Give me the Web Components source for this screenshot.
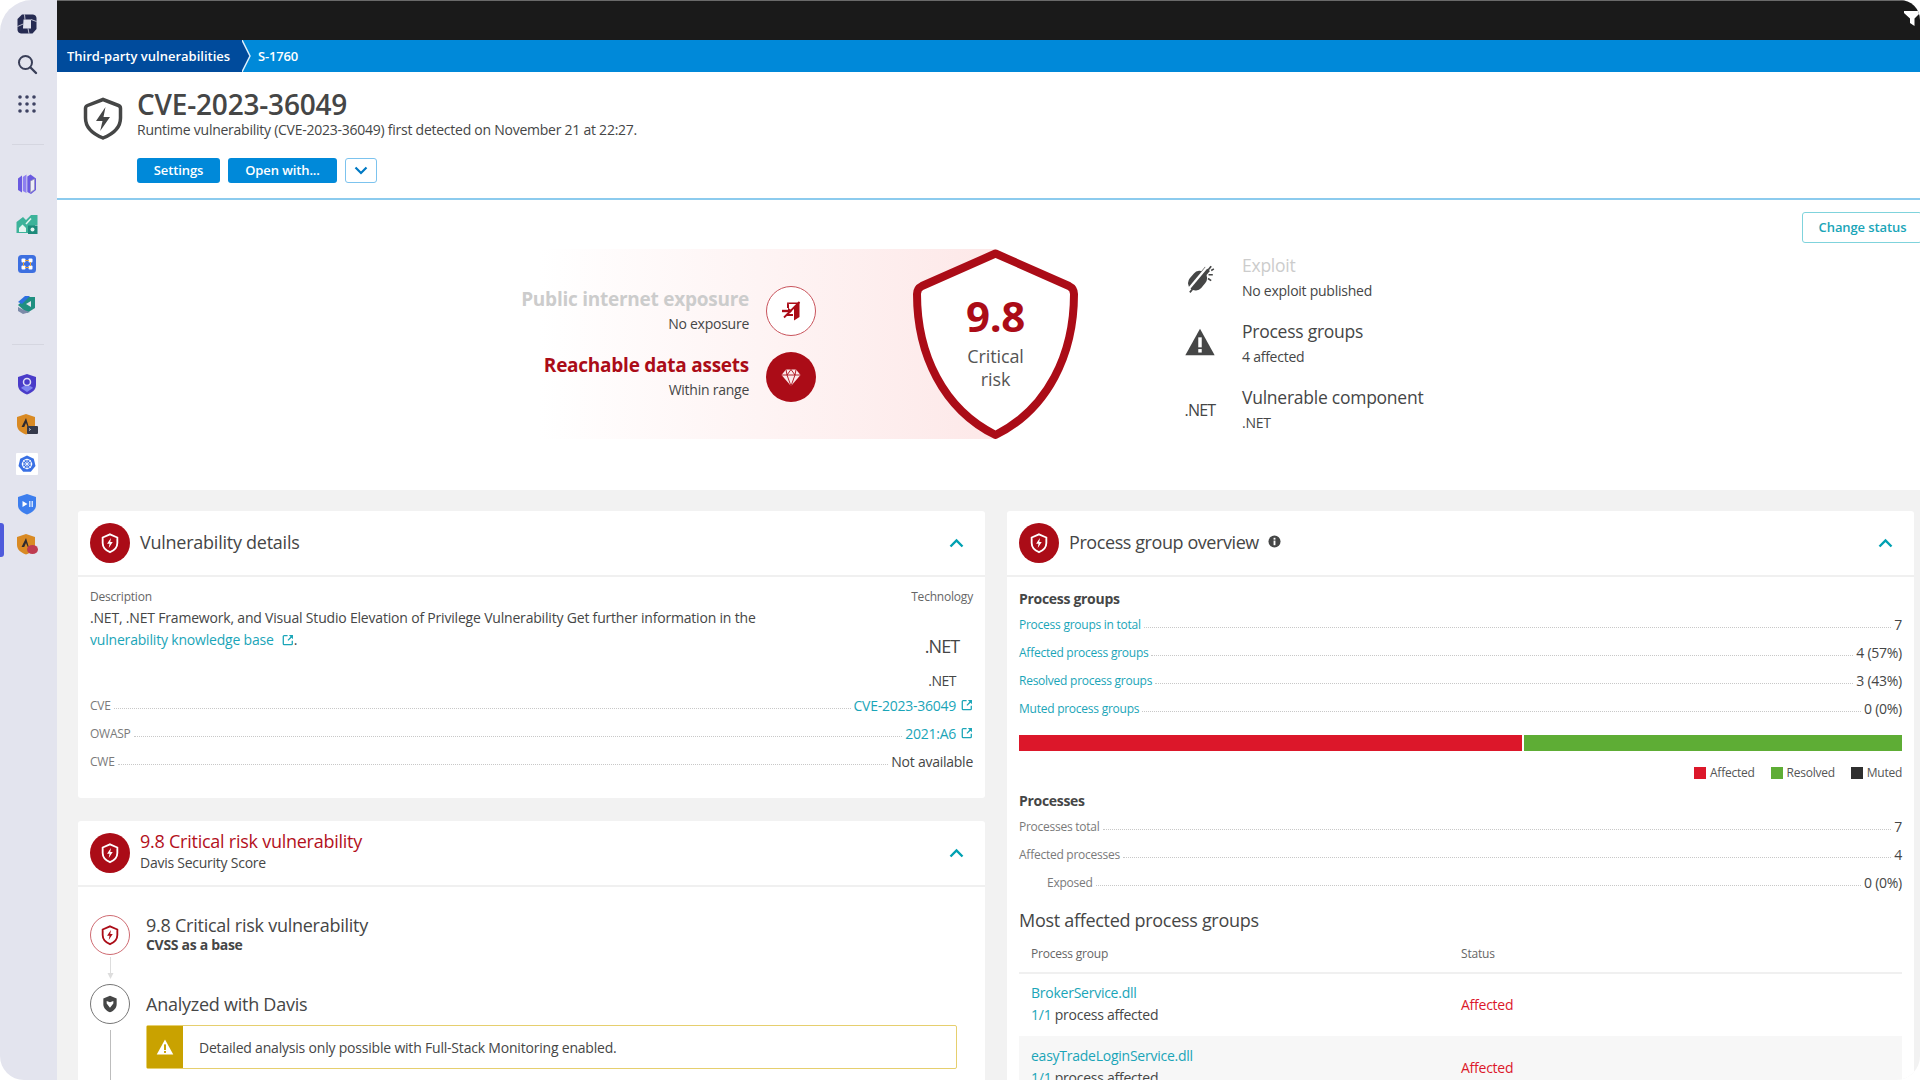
<!DOCTYPE html>
<html lang="en">
<head>
<meta charset="utf-8">
<title>CVE-2023-36049</title>
<style>
  html, body { margin: 0; padding: 0; background: #fff; }
  body { width: 1920px; height: 1080px; overflow: hidden; font-family: "Open Sans", "Liberation Sans", sans-serif; color: #454646; }
</style>
</head>
<body>
<dt-app>
  <dt-rail slot="rail"></dt-rail>
  <dt-crumbs></dt-crumbs>
  <dt-page-header></dt-page-header>
  <dt-hero></dt-hero>
  <dt-columns>
    <div slot="left">
      <dt-panel heading="Vulnerability details">
        <dt-details></dt-details>
      </dt-panel>
      <dt-panel heading="9.8 Critical risk vulnerability" sub="Davis Security Score" danger>
        <dt-score></dt-score>
      </dt-panel>
    </div>
    <div slot="right">
      <dt-panel heading="Process group overview" info>
        <dt-overview></dt-overview>
      </dt-panel>
    </div>
  </dt-columns>
</dt-app>

<script>
const ICONS = {
  shieldBolt: `<path d="M12 2.500 20 6v6c0 5-3.200 8-8 10-4.800-2-8-5-8-10V6z" fill="none" stroke="currentColor" stroke-width="2"/><path d="M13 6.500 8.800 12.800h2.700l-.9 4.700 4.400-6.500h-2.700z" fill="currentColor"/>`,
  external: `<path d="M6.500 2H2.500A1 1 0 0 0 1.500 3v8.500a1 1 0 0 0 1 1H11a1 1 0 0 0 1-1V8" fill="none" stroke="currentColor" stroke-width="1.500"/><path d="M8 1.200h4.800V6l-1.700-1.700-3.600 3.700-1.100-1.100 3.500-3.700z" fill="currentColor"/>`,
  warning: `<path d="M12 2 23 22H1z" fill="currentColor"/><rect x="10.700" y="8.500" width="2.600" height="7.500" fill="var(--mark,#fff)"/><rect x="10.700" y="17.300" width="2.600" height="2.600" fill="var(--mark,#fff)"/>`
};

const svg = (name, size) => `<svg width="${size}" height="${size}" viewBox="0 0 ${name === 'external' ? 14 : 24} ${name === 'external' ? 14 : 24}">${ICONS[name]}</svg>`;

class DtApp extends HTMLElement {
  constructor() {
    super();
    this.attachShadow({ mode: 'open' }).innerHTML = `
      <style>
        :host { display: flex; width: 1920px; height: 1080px; border-radius: 32px 20px 24px 24px; overflow: hidden; background: #fff; font-size: 14px; }
        .rail { flex: 0 0 57px; }
        main { flex: 1; min-width: 0; display: flex; flex-direction: column; }
        .top { flex: 0 0 40px; background: #1a1a1a; box-shadow: inset 0 1px #6a6a6a; display: flex; justify-content: flex-end; align-items: flex-start; }
        .top svg { margin: 11px 0 0 0; }
      </style>
      <div class="rail"><slot name="rail"></slot></div>
      <main>
        <div class="top"><svg width="16" height="16" viewBox="0 0 16 16"><path d="M0 0h16v2l-5.500 5.500V15L6 12V7.500L0 2z" fill="#fff"/></svg></div>
        <slot></slot>
      </main>`;
  }
}

class DtRail extends HTMLElement {
  constructor() {
    super();
    const item = inner => `<div class="it"><svg width="24" height="24" viewBox="0 0 24 24">${inner}</svg></div>`;
    this.attachShadow({ mode: 'open' }).innerHTML = `
      <style>
        :host { display: flex; flex-direction: column; height: 100%; background: #e3e4ee; position: relative; box-sizing: border-box; padding-top: 4px; }
        .it { height: 40px; display: flex; align-items: center; justify-content: center; padding-right: 3px; }
        hr { border: 0; height: 1px; background: #d5d6e0; margin: 20px 13px 19px 12px; }
        .active { position: absolute; left: 0; top: 523px; width: 4px; height: 34px; background: #4f5bdc; border-radius: 0 3px 3px 0; }
      </style>
      ${item(`<path d="M7 2.500H18Q21.500 3 21.500 6.500V17L17.500 21.500H6Q2.500 21 2.500 17.500V7z" fill="#262b52"/><path d="M8.500 7.500H16V16.500H8z" fill="#e3e4ee"/><path d="M2.500 14.500 8.200 12M14 21.500 13 16.500M16 7.500 21.500 9.500M10 7.500 9.500 2.500" stroke="#e3e4ee" stroke-width=".8"/>`)}
      ${item(`<circle cx="10.500" cy="10.500" r="6.500" fill="none" stroke="#3a3f58" stroke-width="2"/><path d="M15.500 15.500 21 21" stroke="#3a3f58" stroke-width="2.400" stroke-linecap="round"/>`)}
      ${item(`<g fill="#3e4262">${[5,12,19].map(y => [5,12,19].map(x => `<circle cx="${x}" cy="${y}" r="1.800"/>`).join('')).join('')}</g>`)}
      <hr>
      ${item(`<path d="M3 6.500 7 3.500V20.500L3 18z" fill="#6a5ae0"/><path d="M7.800 5 11.500 2.500V21L7.800 19z" fill="#8d7ef0"/><path d="M12.300 4.500 15.500 2.500 21 6.500V18L16 22 12.300 20z" fill="#6a5ae0"/><path d="M15.500 9 19.500 7V17.500L15.500 20.500z" fill="#eeeef6" stroke="#9a9ab5" stroke-width=".7"/>`)}
      ${item(`<path d="M1.500 10 8 5l3 3 5-5h6.500v10H20v8H1.500z" fill="#3db39a"/><path d="M13 13.500h9.500V22H13z" fill="#1c8a7a"/><path d="M4 16l3.500-3.500L11 16v4H4z" fill="#e3f5f0"/><path d="M11 12l5-5.500" stroke="#e3f5f0" stroke-width="1.500"/><circle cx="17.500" cy="17.500" r="2" fill="#e3f5f0"/>`)}
      ${item(`<rect x="3" y="3" width="18" height="18" rx="3.500" fill="#3d6fe0"/><g fill="#fff"><rect x="6.500" y="6.500" width="4" height="4" rx="1"/><rect x="13.500" y="6.500" width="4" height="4" rx="1"/><rect x="6.500" y="13.500" width="4" height="4" rx="1"/><rect x="13.500" y="13.500" width="4" height="4" rx="1"/></g><path d="M10 8.500h4M8.500 10v4M15.500 10v4M10 15.500h4" stroke="#e8a33c" stroke-width="1"/>`)}
      ${item(`<path d="M3 13 12 5l8 0v11l-8 5z" fill="#1f8f80"/><path d="M3 10 10 4h5l-8 8z" fill="#2e6fe0"/><path d="M3 15 9 18l6 2-7 2-5-3z" fill="#7c8aa8"/><path d="M11 12l5-3v6z" fill="#e3e4ee"/>`)}
      <hr>
      ${item(`<path d="M12 2 21 5v8c0 4.500-3.500 7.500-9 9.500C6.500 20.500 3 17.500 3 13V5z" fill="#4a3cc9"/><circle cx="12" cy="10" r="3.500" fill="none" stroke="#dfe0f5" stroke-width="1.500"/><path d="M6 16c2-3 10-3 12 0l-6 4z" fill="#7d84f0"/>`)}
      ${item(`<path d="M11 2 20 5v8c0 4.500-3.500 7.500-9 9.500C5.500 20.500 2 17.500 2 13V5z" fill="#d98a24"/><path d="M11 6l-4.500 9h2.700l1.800-4 1.800 4h1z" fill="#2d2a30"/><rect x="12" y="14" width="11" height="8" rx="1" fill="#35394a"/><path d="M14 16.500l1.500 1-1.500 1" stroke="#c9cad6" fill="none"/>`)}
      ${item(`<rect x="1" y="1" width="22" height="22" rx="1" fill="#fff"/><path d="M12 3.500 18.800 6.700 20.500 14 15.800 19.800H8.200L3.500 14 5.200 6.700z" fill="#3970e4"/><circle cx="12" cy="12" r="4.500" fill="none" stroke="#fff" stroke-width="1.200"/><path d="M12 6.500v11M6.500 12h11M8 8l8 8M16 8l-8 8" stroke="#fff" stroke-width=".7"/>`)}
      ${item(`<path d="M12 2 21 5v8c0 4.500-3.500 7.500-9 9.500C6.500 20.500 3 17.500 3 13V5z" fill="#3d7eee"/><path d="M7.500 9l5 3-5 3z" fill="#fff"/><rect x="14" y="9" width="1.500" height="6" fill="#cfe0fb"/><rect x="16.500" y="9" width="1.500" height="6" fill="#cfe0fb"/>`)}
      ${item(`<path d="M11 2 20 5v8c0 4.500-3.500 7.500-9 9.500C5.500 20.500 2 17.500 2 13V5z" fill="#d98a24"/><path d="M11 6l-4.500 9h2.700l1.800-4 1.800 4h1z" fill="#2d2a30"/><ellipse cx="17.500" cy="17.500" rx="5.500" ry="4.500" fill="#bf3b50"/>`)}
      <div class="active"></div>`;
  }
}

class DtCrumbs extends HTMLElement {
  constructor() {
    super();
    this.attachShadow({ mode: 'open' }).innerHTML = `
      <style>
        :host { display: flex; flex: 0 0 32px; align-items: stretch; background: #0089d9; color: #fff; font-size: 13px; font-weight: 600; }
        .first { background: #004b9c; width: 185px; padding-left: 10px; box-sizing: border-box; display: flex; align-items: center; white-space: nowrap; }
        svg { display: block; }
        .cur { margin-left: 7px; display: flex; align-items: center; letter-spacing: -.2px; }
      </style>
      <div class="first">Third-party vulnerabilities</div>
      <svg width="9" height="32" viewBox="0 0 9 32"><path d="M0 0 8 16 0 32z" fill="#004b9c"/><path d="M0 0 8 16 0 32" fill="none" stroke="#d8ecfa" stroke-width="1.500"/></svg>
      <div class="cur">S-1760</div>`;
  }
}

class DtPageHeader extends HTMLElement {
  constructor() {
    super();
    this.attachShadow({ mode: 'open' }).innerHTML = `
      <style>
        :host { display: flex; flex: 0 0 126px; gap: 14px; padding: 0 0 0 26px; border-bottom: 2px solid #8ccbee; background: #fff; }
        .ico { margin-top: 25px; color: #454646; width: 40px; height: 43px; }
        .col { padding-top: 15px; display: flex; flex-direction: column; align-items: flex-start; }
        h1 { margin: 0; font-size: 28px; line-height: 34px; font-weight: 600; letter-spacing: -.2px; color: #454646; }
        p { margin: 0; font-size: 14px; line-height: 18px; color: #454646; letter-spacing: -.25px; }
        .btns { display: flex; gap: 8px; margin-top: 19px; }
        button { font: 600 13px/25px "Open Sans", sans-serif; letter-spacing: -.1px; height: 25px; border: 0; border-radius: 3px; background: #0089d9; color: #fff; padding: 0; }
        .s { width: 83px; } .o { width: 109px; }
        .d { width: 32px; background: #fff; border: 1px solid #7cc3ee; display: flex; align-items: center; justify-content: center; }
      </style>
      <svg class="ico" viewBox="0 0 40 43"><path d="M20 2.500 35.500 8.500Q37.500 9.300 37.500 11.500V21C37.500 31 30 37 20 41 10 37 2.500 31 2.500 21V11.500Q2.500 9.300 4.500 8.500Z" fill="none" stroke="currentColor" stroke-width="3.500"/><path d="M22.500 10 13 24h6.500l-2.300 10L27 20h-6.500z" fill="currentColor"/></svg>
      <div class="col">
        <h1>CVE-2023-36049</h1>
        <p>Runtime vulnerability (CVE-2023-36049) first detected on November 21 at 22:27.</p>
        <div class="btns">
          <button class="s">Settings</button>
          <button class="o">Open with...</button>
          <button class="d"><svg width="14" height="9" viewBox="0 0 14 9"><path d="M1.500 1.500 7 7l5.500-5.500" fill="none" stroke="#0079c4" stroke-width="2.200"/></svg></button>
        </div>
      </div>`;
  }
}

class DtFact extends HTMLElement {
  constructor() {
    super();
    this.attachShadow({ mode: 'open' }).innerHTML = `
      <style>
        :host { display: flex; align-items: center; justify-content: flex-end; gap: 17px; height: 50px; }
        .t { text-align: right; }
        .a { font-size: 19px; line-height: 26px; font-weight: 700; letter-spacing: -.25px; color: var(--head, #ccc); white-space: nowrap; }
        .b { font-size: 14px; line-height: 24px; color: #454646; letter-spacing: -.25px; }
        .c { flex: none; width: 50px; height: 50px; border-radius: 50%; box-sizing: border-box; display: flex; align-items: center; justify-content: center; }
        :host([on]) .c { background: #ab0c17; }
        :host(:not([on])) .c { background: #fff; border: 1.500px solid #c9545c; }
      </style>
      <div class="t"><div class="a"><slot name="a"></slot></div><div class="b"><slot name="b"></slot></div></div>
      <div class="c"><slot></slot></div>`;
  }
}

class DtMeta extends HTMLElement {
  constructor() {
    super();
    this.attachShadow({ mode: 'open' }).innerHTML = `
      <style>
        :host { display: flex; align-items: center; gap: 24px; height: 50px; }
        .i { flex: 0 0 36px; display: flex; justify-content: center; font-size: 16px; color: #454646; letter-spacing: -.8px; }
        .a { font-size: 17.500px; line-height: 25px; color: var(--head, #454646); letter-spacing: -.25px; white-space: nowrap; }
        .b { font-size: 14px; line-height: 25px; color: #454646; letter-spacing: -.25px; }
      </style>
      <div class="i"><slot></slot></div>
      <div><div class="a"><slot name="a"></slot></div><div class="b"><slot name="b"></slot></div></div>`;
  }
}

class DtHero extends HTMLElement {
  constructor() {
    super();
    this.attachShadow({ mode: 'open' }).innerHTML = `
      <style>
        :host { display: flex; flex: 0 0 290px; box-sizing: border-box; padding: 49px 0 0 463px; background: #fff; align-items: flex-start; }
        .band { display: flex; align-items: center; width: 558px; height: 190px; flex: none; background: linear-gradient(90deg, rgba(253,232,232,0) 3.500%, #fde8e8 85.300%, rgba(253,232,232,0) 85.300%); }
        .facts { width: 296px; display: flex; flex-direction: column; gap: 16px; }
        .shield { width: 165px; height: 190px; margin-left: 97px; position: relative; flex: none; display: flex; flex-direction: column; align-items: center; box-sizing: border-box; padding-top: 41px; }
        .shield > svg { position: absolute; inset: 0; }
        .score, .lab { position: relative; }
        .score { font-size: 42px; line-height: 52px; font-weight: 700; color: #ab0c17; letter-spacing: -.3px; }
        .lab { font-size: 18px; line-height: 23px; color: #555; text-align: center; margin-top: 3px; letter-spacing: -.1px; }
        .meta { margin-left: 104px; display: flex; flex-direction: column; gap: 16px; height: 190px; justify-content: center; }
        .change { margin: -37px -2px 0 auto; height: 31px; width: 120px; box-sizing: border-box; border: 1.500px solid #7fd3dc; border-radius: 3px; background: #fff; color: #1aa5b8; font: 600 13px "Open Sans", sans-serif; letter-spacing: -.1px; padding: 0 0 2px 1px; }
      </style>
      <div class="band">
        <div class="facts">
          <dt-fact>
            <span slot="a">Public internet exposure</span><span slot="b">No exposure</span>
            <svg width="24" height="24" viewBox="0 0 24 24"><path d="M8 3.500h12.500V18l-5.500 3.500V8.500L19 5H9.500z" fill="#ab0c17"/><path d="M8 3.500V9h2V5.500zM8 15v2h6v-2z" fill="#ab0c17"/><path d="M3 12h9" stroke="#ab0c17" stroke-width="2.400"/><path d="M9 8.500 13 12l-4 3.500z" fill="#ab0c17"/><path d="M5 18.500 20.500 3" stroke="#ab0c17" stroke-width="1.800"/></svg>
          </dt-fact>
          <dt-fact on style="--head:#ab0c17">
            <span slot="a">Reachable data assets</span><span slot="b">Within range</span>
            <svg width="22" height="22" viewBox="0 0 22 22"><path d="M6 3.500h10L20.500 9 11 20 1.500 9z" fill="#fbe9ea"/><path d="M1.500 9h19M7 9l4 11 4-11M6 3.500 7 9l4-5.500L15 9l1-5.500" fill="none" stroke="#ab0c17" stroke-width=".9"/></svg>
          </dt-fact>
        </div>
        <div class="shield">
          <svg width="165" height="190" viewBox="0 0 165 190"><path d="M82.500 4.500 156 37Q161 39.500 161 45C161 105 135 160 82.500 186 30 160 4 105 4 45Q4 39.500 9 37Z" fill="#fff" stroke="#ab0c17" stroke-width="8" stroke-linejoin="round"/></svg>
          <div class="score">9.8</div>
          <div class="lab">Critical<br>risk</div>
        </div>
      </div>
      <div class="meta">
        <dt-meta style="--head:#ccc">
          <span slot="a">Exploit</span><span slot="b">No exploit published</span>
          <svg width="30" height="32" viewBox="0 0 28 30"><g transform="rotate(40 13 16)"><rect x="6" y="8" width="14" height="20" rx="7" fill="#454646"/><rect x="10" y="3.500" width="6" height="5.500" fill="#454646"/></g><path d="M2 27 22 3" stroke="#fff" stroke-width="2.200"/><path d="M4.500 28.500 24.500 4" stroke="#454646" stroke-width="1.600"/><path d="M22 12h4M21.500 15.500l3 2M24.500 8l2.500-1.500" stroke="#454646" stroke-width="1.500"/></svg>
        </dt-meta>
        <dt-meta>
          <span slot="a">Process groups</span><span slot="b">4 affected</span>
          <span style="color:#454646">${svg('warning', 32)}</span>
        </dt-meta>
        <dt-meta>
          <span slot="a">Vulnerable component</span><span slot="b">.NET</span>
          .NET
        </dt-meta>
      </div>
      <button class="change">Change status</button>`;
  }
}

class DtColumns extends HTMLElement {
  constructor() {
    super();
    this.attachShadow({ mode: 'open' }).innerHTML = `
      <style>
        :host { display: flex; flex: 1; min-height: 0; gap: 22px; padding: 21px 6px 0 21px; background: #f2f2f2; overflow: hidden; }
        ::slotted(div) { flex: 0 0 907px; display: flex; flex-direction: column; gap: 23px; min-width: 0; }
      </style>
      <slot name="left"></slot><slot name="right"></slot>`;
  }
}

class DtBadge extends HTMLElement {
  constructor() {
    super();
    const kind = this.getAttribute('kind') || 'solid';
    this.attachShadow({ mode: 'open' }).innerHTML = `
      <style>
        :host { display: flex; flex: none; width: 40px; height: 40px; border-radius: 50%; box-sizing: border-box; align-items: center; justify-content: center; }
        :host([kind="solid"]) { background: #ab0c17; color: #fff; }
        :host([kind="line"]) { background: #fff; border: 1.500px solid #cf6b72; color: #ab0c17; }
        :host([kind="dark"]) { background: #fff; border: 1.500px solid #777; color: #454646; }
      </style>
      ${kind === 'dark'
        ? `<svg width="20" height="20" viewBox="0 0 24 24"><path d="M12 2 20 5.500V12c0 5-3.200 8-8 10-4.800-2-8-5-8-10V5.500z" fill="currentColor"/><path d="M8 8.500l4 1.500 4-1.500v3l-4 5-4-5z" fill="#fff"/></svg>`
        : svg('shieldBolt', 22)}`;
  }
}

class DtPanel extends HTMLElement {
  constructor() {
    super();
    const heading = this.getAttribute('heading');
    const sub = this.getAttribute('sub');
    const info = this.hasAttribute('info') ? `<svg class="info" width="13" height="13" viewBox="0 0 14 14"><circle cx="7" cy="7" r="6.500" fill="#454646"/><rect x="6" y="6" width="2" height="5" fill="#fff"/><rect x="6" y="3" width="2" height="2" fill="#fff"/></svg>` : '';
    this.attachShadow({ mode: 'open' }).innerHTML = `
      <style>
        :host { display: block; background: #fff; border-radius: 3px; }
        header { display: flex; align-items: center; gap: 10px; height: 66px; box-sizing: border-box; padding: 0 21px 0 12px; border-bottom: 2px solid #f0f0f0; }
        .txt { margin-top: -2px; }
        .h { font-size: 18px; line-height: 24px; letter-spacing: -.25px; color: #454646; }
        :host([info]) .h { letter-spacing: -.42px; }
        :host([danger]) .h { color: #b3101c; line-height: 22px; }
        .s { font-size: 14px; line-height: 22px; letter-spacing: -.25px; color: #454646; }
        .info { margin: -3px 0 0 -1px; flex: none; }
        .chev { margin-left: auto; flex: none; }
      </style>
      <header>
        <dt-badge kind="solid"></dt-badge>
        <div class="txt"><div class="h">${heading}</div>${sub ? `<div class="s">${sub}</div>` : ''}</div>
        ${info}
        <svg class="chev" width="15" height="10" viewBox="0 0 15 10"><path d="M1.500 8.500 7.500 2.500l6 6" fill="none" stroke="#00a1b2" stroke-width="2.400"/></svg>
      </header>
      <slot></slot>`;
  }
}

class DtRow extends HTMLElement {
  constructor() {
    super();
    this.attachShadow({ mode: 'open' }).innerHTML = `
      <style>
        :host { display: flex; align-items: center; height: 28px; font-size: 14px; letter-spacing: -.25px; color: #454646; }
        .l { font-size: 12px; color: #7a7a7a; letter-spacing: -.25px; white-space: nowrap; }
        :host([link]) .l { color: #1aa5b8; }
        :host([indent]) .l { margin-left: 28px; }
        .dots { flex: 1; align-self: flex-end; margin: 0 3px 10px 3px; border-bottom: 1px dotted #c8c8c8; }
        .v { white-space: nowrap; display: flex; align-items: center; gap: 5px; }
      </style>
      <span class="l">${this.getAttribute('label')}</span><span class="dots"></span><span class="v"><slot></slot></span>`;
  }
}

class DtDetails extends HTMLElement {
  constructor() {
    super();
    const ext = `<span style="color:#1aa5b8;display:inline-flex">${svg('external', 12)}</span>`;
    this.attachShadow({ mode: 'open' }).innerHTML = `
      <style>
        :host { display: block; padding: 12px 12px 23px; }
        .top { display: flex; justify-content: space-between; height: 102px; }
        .cap { font-size: 12px; line-height: 16px; color: #666; letter-spacing: -.2px; }
        .desc { width: 720px; }
        p { margin: 2px 0 0; font-size: 14px; line-height: 22px; color: #454646; letter-spacing: -.19px; }
        p a { color: #1aa5b8; text-decoration: none; }
        p span { display: inline-block; color: #1aa5b8; vertical-align: -1px; margin-left: 8px; }
        .tech { text-align: center; }
        .tech .big { font-size: 18px; line-height: 24px; margin-top: 29px; letter-spacing: -.9px; }
        .tech .sm { font-size: 14px; line-height: 20px; margin-top: 13px; letter-spacing: -.5px; }
      </style>
      <div class="top">
        <div class="desc"><div class="cap">Description</div>
          <p>.NET, .NET Framework, and Visual Studio Elevation of Privilege Vulnerability Get further information in the<br><a>vulnerability knowledge base</a><span>${svg('external', 12)}</span>.</p>
        </div>
        <div class="tech"><div class="cap">Technology</div><div class="big">.NET</div><div class="sm">.NET</div></div>
      </div>
      <dt-row label="CVE"><a style="color:#1aa5b8">CVE-2023-36049</a>${ext}</dt-row>
      <dt-row label="OWASP"><a style="color:#1aa5b8">2021:A6</a>${ext}</dt-row>
      <dt-row label="CWE">Not available</dt-row>`;
  }
}

class DtScore extends HTMLElement {
  constructor() {
    super();
    this.attachShadow({ mode: 'open' }).innerHTML = `
      <style>
        :host { display: block; padding: 28px 28px 0 12px; height: 200px; box-sizing: border-box; overflow: hidden; }
        .step { display: flex; align-items: center; gap: 16px; height: 40px; }
        .lift { margin-top: -4px; }
        .tt { font-size: 18px; line-height: 24px; letter-spacing: -.25px; color: #454646; }
        .st { font-size: 14px; line-height: 16px; font-weight: 700; letter-spacing: -.3px; }
        .conn { width: 40px; height: 25px; display: flex; justify-content: center; margin: 2px 0; }
        .body { display: flex; gap: 16px; }
        .rule { flex: 0 0 40px; display: flex; justify-content: center; }
        .rule i { width: 1px; background: #bdbdbd; height: 60px; margin-top: 6px; }
        .warn { flex: 1; display: flex; align-items: center; height: 44px; margin-top: 1px; box-sizing: border-box; border: 1.500px solid #e6cf6e; border-radius: 2px; font-size: 14px; letter-spacing: -.2px; color: #454646; }
        .warn b { align-self: stretch; flex: 0 0 36px; background: #c9a200; color: #fff; display: flex; align-items: center; justify-content: center; --mark: #c9a200; }
        .warn span { margin-left: 16px; }
      </style>
      <div class="step"><dt-badge kind="line"></dt-badge><div class="lift"><div class="tt">9.8 Critical risk vulnerability</div><div class="st">CVSS as a base</div></div></div>
      <div class="conn"><svg width="9" height="25" viewBox="0 0 9 25"><path d="M4.500 0v18" stroke="#ddd"/><path d="M1.500 16h6l-3 6z" fill="#ddd"/></svg></div>
      <div class="step"><dt-badge kind="dark"></dt-badge><div class="tt">Analyzed with Davis</div></div>
      <div class="body"><div class="rule"><i></i></div><div class="warn"><b>${svg('warning', 18)}</b><span>Detailed analysis only possible with Full-Stack Monitoring enabled.</span></div></div>`;
  }
}

class DtOverview extends HTMLElement {
  constructor() {
    super();
    const row = (name, n) => `
      <div class="tr ${n ? 'alt' : ''}">
        <div class="c1"><div class="n">${name}</div><div class="p"><span>1/1</span> process affected</div></div>
        <div class="aff">Affected</div>
      </div>`;
    this.attachShadow({ mode: 'open' }).innerHTML = `
      <style>
        :host { display: block; padding: 12px 12px 0; height: 510px; box-sizing: border-box; overflow: hidden; }
        h4 { margin: 0; font-size: 14px; line-height: 20px; font-weight: 700; letter-spacing: -.3px; color: #454646; }
        .rows { margin-top: 1px; }
        .bar { display: flex; gap: 2px; height: 16px; margin-top: 13px; }
        .bar i:first-child { flex: 0 0 503px; background: #dc172a; }
        .bar i:last-child { flex: 1; background: #5ead35; }
        .legend { display: flex; justify-content: flex-end; gap: 16px; margin-top: 14px; height: 16px; font-size: 12px; line-height: 16px; letter-spacing: -.25px; color: #555; }
        .legend span { display: flex; align-items: center; gap: 4px; }
        .legend i { width: 12px; height: 12px; }
        .proc { margin-top: 10px; }
        .proc .rows { margin-top: 1px; }
        h3 { margin: 12px 0 0; font-size: 18px; line-height: 24px; font-weight: 400; letter-spacing: -.3px; color: #454646; }
        .th { display: grid; grid-template-columns: 430px 1fr; padding: 0 12px 10px; margin-top: 14px; font-size: 12px; line-height: 16px; letter-spacing: -.2px; color: #666; border-bottom: 2px solid #f0f0f0; }
        .tr { display: grid; grid-template-columns: 430px 1fr; padding: 8px 12px 0; height: 62px; box-sizing: border-box; align-items: start; }
        .alt { background: #f7f7f7; height: 70px; padding-top: 9px; }
        .n { font-size: 14px; line-height: 21px; color: #1aa5b8; letter-spacing: -.25px; }
        .p { font-size: 14px; line-height: 24px; color: #454646; letter-spacing: -.25px; }
        .p span { color: #1aa5b8; }
        .aff { color: #dc172a; font-size: 14px; letter-spacing: -.25px; line-height: 20px; margin-top: 13px; }
      </style>
      <h4>Process groups</h4>
      <div class="rows">
        <dt-row link label="Process groups in total">7</dt-row>
        <dt-row link label="Affected process groups">4 (57%)</dt-row>
        <dt-row link label="Resolved process groups">3 (43%)</dt-row>
        <dt-row link label="Muted process groups">0 (0%)</dt-row>
      </div>
      <div class="bar"><i></i><i></i></div>
      <div class="legend">
        <span><i style="background:#dc172a"></i>Affected</span>
        <span><i style="background:#5ead35"></i>Resolved</span>
        <span><i style="background:#2f2f2f"></i>Muted</span>
      </div>
      <div class="proc">
        <h4>Processes</h4>
        <div class="rows">
          <dt-row label="Processes total">7</dt-row>
          <dt-row label="Affected processes">4</dt-row>
          <dt-row indent label="Exposed">0 (0%)</dt-row>
        </div>
      </div>
      <h3>Most affected process groups</h3>
      <div class="th"><div>Process group</div><div>Status</div></div>
      ${row('BrokerService.dll', 0)}
      ${row('easyTradeLoginService.dll', 1)}`;
  }
}

customElements.define('dt-app', DtApp);
customElements.define('dt-rail', DtRail);
customElements.define('dt-crumbs', DtCrumbs);
customElements.define('dt-page-header', DtPageHeader);
customElements.define('dt-fact', DtFact);
customElements.define('dt-meta', DtMeta);
customElements.define('dt-hero', DtHero);
customElements.define('dt-columns', DtColumns);
customElements.define('dt-badge', DtBadge);
customElements.define('dt-panel', DtPanel);
customElements.define('dt-row', DtRow);
customElements.define('dt-details', DtDetails);
customElements.define('dt-score', DtScore);
customElements.define('dt-overview', DtOverview);
</script>
</body>
</html>
